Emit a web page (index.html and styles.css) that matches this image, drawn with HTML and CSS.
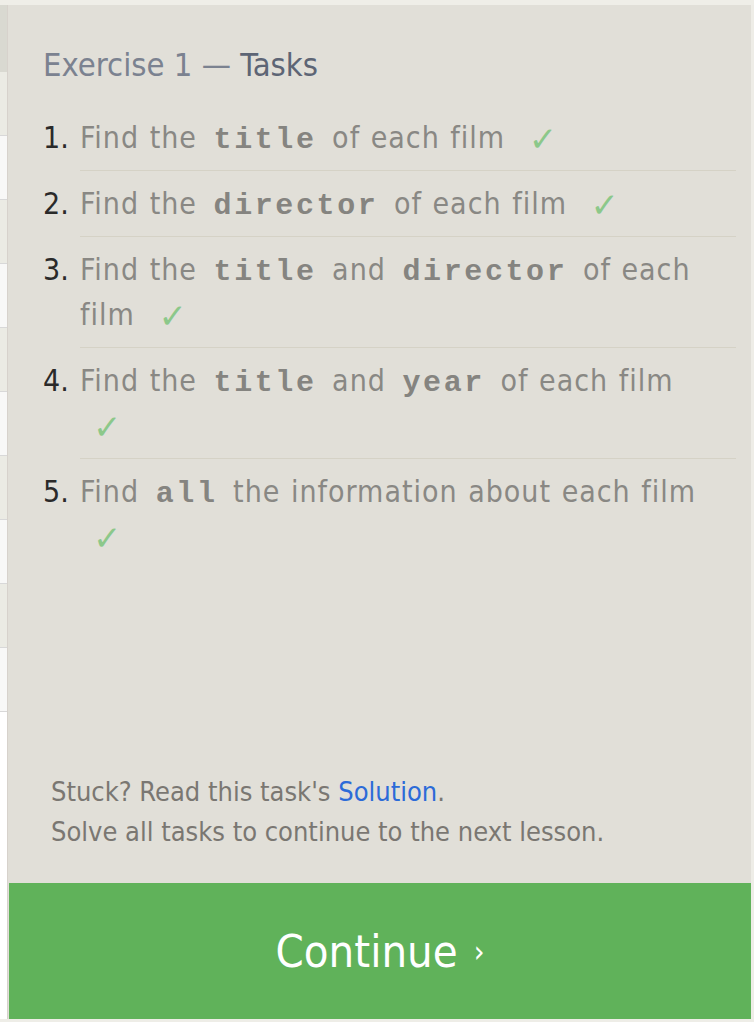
FILE: index.html
```html
<!DOCTYPE html>
<html>
<head>
<meta charset="utf-8">
<link rel="stylesheet" href="styles.css">
</head>
<body>
<div class="topstrip"></div>
<div class="main">
  <div class="stub">
    <div class="stub-head"></div>
    <div class="stub-row alt"></div>
    <div class="stub-row"></div>
    <div class="stub-row alt"></div>
    <div class="stub-row"></div>
    <div class="stub-row alt"></div>
    <div class="stub-row"></div>
    <div class="stub-row alt"></div>
    <div class="stub-row"></div>
    <div class="stub-row alt"></div>
    <div class="stub-row"></div>
  </div>
  <div class="panel">
    <h2 class="title">Exercise 1 — <span class="title-strong">Tasks</span></h2>
    <ol class="tasks">
      <li class="task"><span class="num">1.</span><div class="body">Find the <code>title</code> of each film <span class="check">✓</span></div></li>
      <li class="task"><span class="num">2.</span><div class="body">Find the <code>director</code> of each film <span class="check">✓</span></div></li>
      <li class="task"><span class="num">3.</span><div class="body">Find the <code>title</code> and <code>director</code> of each <span class="w">film</span> <span class="check">✓</span></div></li>
      <li class="task"><span class="num">4.</span><div class="body">Find the <code>title</code> and <code>year</code> of each film <span class="check">✓</span></div></li>
      <li class="task last"><span class="num">5.</span><div class="body">Find <code>all</code> the information about each film <span class="check">✓</span></div></li>
    </ol>
    <div class="spacer"></div>
    <p class="hint">Stuck? Read this task's <a class="link" href="#">Solution</a>.<br>Solve all tasks to continue to the next lesson.</p>
    <a class="continue" href="#">Continue <span class="chev">›</span></a>
  </div>
  <div class="rightstrip"></div>
</div>
</body>
</html>
```

FILE: styles.css
```css
html, body {
  margin: 0;
  padding: 0;
}
body {
  width: 754px;
  height: 1022px;
  overflow: hidden;
  background: #eeede7;
  font-family: "DejaVu Sans Condensed", "DejaVu Sans", sans-serif;
}
.topstrip {
  height: 5px;
  background: #efeee8;
}
.main {
  display: flex;
  height: 1014px;
}
.stub {
  width: 7px;
  background: #ffffff;
  display: flex;
  flex-direction: column;
}
.stub-head {
  height: 67px;
  background: #d9d9d1;
}
.stub-row {
  height: 63px;
  background: #f8f8f7;
  border-bottom: 1px solid #d8d8d8;
}
.stub-row.alt {
  background: #ebebe4;
}
.panel {
  flex: 1;
  background: #e1dfd8;
  border-left: 1px solid #d7d2cc;
  display: flex;
  flex-direction: column;
  padding: 40px 15px 0 35px;
}
.rightstrip {
  width: 3px;
  background: #eeede7;
}
.title {
  margin: 0;
  font-size: 32.5px;
  line-height: 40px;
  font-weight: normal;
  color: #7b8290;
}
.title-strong {
  color: #5d6575;
}
.tasks {
  list-style: none;
  margin: 20px 0 0;
  padding: 0;
}
.task {
  display: flex;
}
.num {
  width: 37px;
  flex: none;
  font-size: 30px;
  line-height: 45px;
  padding-top: 10px;
  color: #2a2a2a;
}
.body {
  flex: 1;
  font-size: 30px;
  line-height: 45px;
  letter-spacing: 1px;
  word-spacing: 1px;
  padding: 10px 0;
  color: #898884;
  border-bottom: 1px solid #d5d2c6;
}
.task.last .body {
  border-bottom: none;
}
.w {
  display: inline-block;
}
code {
  font-family: "Liberation Mono", monospace;
  font-weight: bold;
  font-size: 30px;
  line-height: 1;
  letter-spacing: 2.6px;
  word-spacing: 0;
  color: #858480;
  padding: 0 5px 0 6px;
}
.check {
  display: inline-block;
  width: 46px;
  margin-left: 13px;
  color: #8cc88a;
  font-family: "DejaVu Sans", sans-serif;
  font-size: 34px;
  line-height: 1;
  vertical-align: -3px;
}
.spacer {
  flex: 1;
}
.hint {
  margin: 0 0 31px 8px;
  font-size: 27px;
  line-height: 40px;
  color: #7a7772;
}
.link {
  color: #2c6bd8;
  text-decoration: none;
}
.continue {
  display: flex;
  align-items: center;
  justify-content: center;
  height: 136px;
  margin: 0 -15px 0 -34px;
  background: #60b25a;
  color: #ffffff;
  font-size: 45px;
  text-decoration: none;
}
.chev {
  font-size: 30px;
  margin-left: 16px;
}
```
